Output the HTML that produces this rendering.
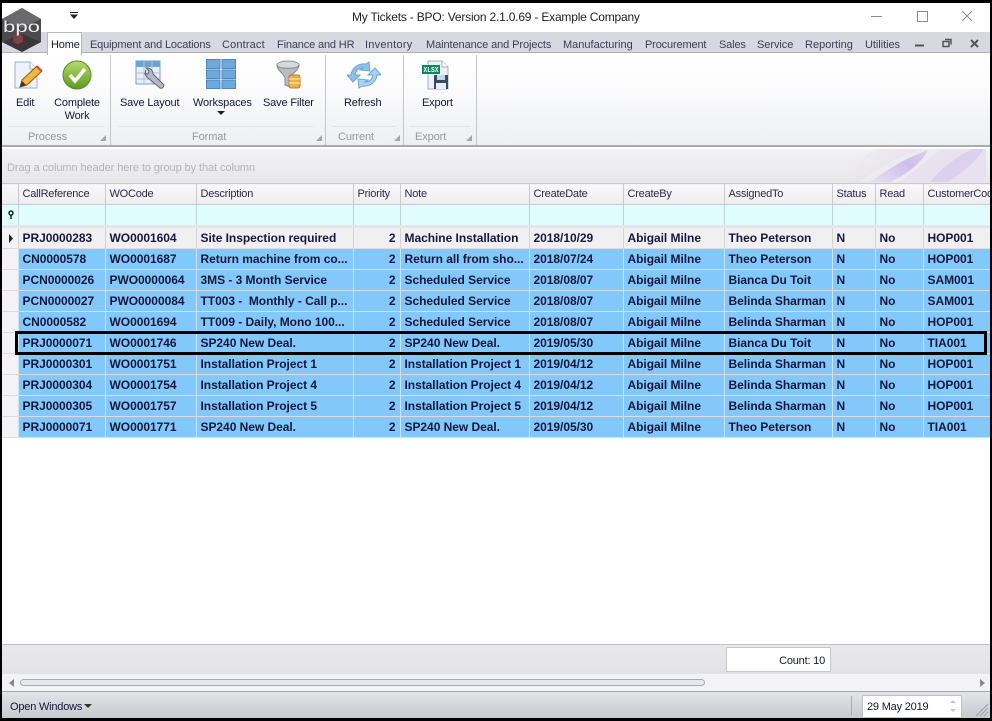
<!DOCTYPE html>
<html><head><meta charset="utf-8"><title>My Tickets</title>
<style>
html,body{margin:0;padding:0;background:#000}
#app{position:relative;width:992px;height:721px;overflow:hidden;background:#fff;font:11px "Liberation Sans",sans-serif;color:#15153a;letter-spacing:-.2px}
.a{position:absolute;white-space:nowrap}
#bt{left:0;top:0;width:992px;height:3px;background:#000}
#bl{left:0;top:0;width:2px;height:721px;background:#000;z-index:9}
#br{left:990px;top:0;width:2px;height:721px;background:#000;z-index:9}
#bb{left:0;top:718px;width:992px;height:3px;background:#000;z-index:9}
#tabs{left:2px;top:32px;width:988px;height:21px;background:#d6d9df;border-bottom:1px solid #aeb0b5;box-sizing:border-box}
.tab{top:39px;color:#3c3c58;letter-spacing:-.15px}
#ribbon{left:2px;top:53px;width:988px;height:92px;background:linear-gradient(#fff 0,#fcfcfd 35%,#eeeff2 100%);border-bottom:2px solid #a9abaf;box-sizing:content-box}
.sep{top:55px;width:1px;height:90px;background:#c5c6ca}
.lab{color:#15153a;text-align:center;line-height:13px;letter-spacing:-.16px}
.grp{top:131px;color:#98999e;text-align:center;letter-spacing:-.1px}
.gl{top:126px;height:1px;background:#e3e4e7}
.cor{top:135px;width:0;height:0;border-left:6px solid transparent;border-bottom:6px solid #a5a6aa}
#gp{left:2px;top:149px;width:988px;height:34px;background:linear-gradient(#f2f2f4,#e7e7ea)}
table{position:absolute;left:2px;border-collapse:collapse;table-layout:fixed;width:988px}
.grid td{height:20px;padding:0 0 0 5px;overflow:hidden;white-space:nowrap;box-sizing:border-box;border-right:1px solid #ccc8d0;border-bottom:1px solid #ddd6da}
#h td{background:linear-gradient(#f8f8f9,#eeeef1);color:#2a2a48;border-color:#c9c9ce;height:21px;border-top:1px solid #c9c9ce;letter-spacing:-.22px;padding-left:4px}
#f td{background:#e0fdfe;border-color:#c9d0d4;height:21px}
.grid td:first-child{background:#f3f3f5;padding:0;border-color:#d3d3d8}
.r td{background:#83c8fb;font-weight:700;font-size:12px;color:#17173c;letter-spacing:-.04px;height:21px!important;border-right-color:#cfe3f5!important;border-bottom-color:#e3d9da!important;padding-left:4px}
.r0 td{background:#f0f0f2;height:20px!important}
.r0 td{border-right-color:#d4d4d8!important}
.r td.n{text-align:right;padding-right:4px!important}
#box{left:15px;top:331px;width:972px;height:24px;border:3px solid #000;box-sizing:border-box;z-index:5}
#foot{left:2px;top:644px;width:988px;height:30px;background:linear-gradient(#e9e9ec,#e2e2e6);border-top:1px solid #c4c4c9;box-sizing:border-box}
#cnt{left:726px;top:647px;width:105px;height:25px;background:#fff;border:1px solid #c6c7cb;box-sizing:border-box;text-align:right;padding:7px 5px 0 0;color:#15153a}
#sc{left:2px;top:674px;width:988px;height:17px;background:#f3f3f5}
#th{left:20px;top:679px;width:685px;height:7px;background:#e6e7ea;border:1px solid #a9abb2;border-radius:4px;box-sizing:border-box}
#st{left:2px;top:691px;width:988px;height:27px;background:linear-gradient(#e3e3e7,#c9cad0);border-top:1px solid #a5a6ab;box-sizing:border-box}
#dt{left:862px;top:695px;width:100px;height:22px;background:#fff;box-sizing:border-box;padding:5px 0 0 4px;border:1px solid #c0c1c6;border-bottom:0}
</style></head><body>
<div id="app">
<div class="a" id="bt"></div><div class="a" id="bl"></div><div class="a" id="br"></div><div class="a" id="bb"></div>

<div class="a" style="left:352px;top:10px;font-size:12px;color:#222;letter-spacing:-.2px">My Tickets - BPO: Version 2.1.0.69 - Example Company</div>
<svg class="a" style="left:68px;top:11px" width="12" height="10"><path d="M2 1h8v1H2zM2 3.500h8L6 8z" fill="#222"/></svg>
<svg class="a" style="left:870px;top:8px" width="110" height="18" fill="none" stroke="#8a8a8a"><path d="M1 8.500h11"/><path d="M47.500 3.500h10v10h-10z"/><path d="M92 3l10 10M102 3L92 13"/></svg>

<div class="a" id="tabs"></div>
<div class="a" style="left:47px;top:32px;width:35px;height:23px;background:#fff;border:1px solid #b7b9bd;border-bottom:0;box-sizing:border-box;z-index:2"></div>
<div class="a tab" style="left:51px;color:#15153a;z-index:3">Home</div>
<div class="a tab" style="left:90px">Equipment and Locations</div>
<div class="a tab" style="left:222px;letter-spacing:.15px">Contract</div>
<div class="a tab" style="left:277px">Finance and HR</div>
<div class="a tab" style="left:365px;letter-spacing:.25px">Inventory</div>
<div class="a tab" style="left:426px;letter-spacing:-.08px">Maintenance and Projects</div>
<div class="a tab" style="left:563px;letter-spacing:0">Manufacturing</div>
<div class="a tab" style="left:645px">Procurement</div>
<div class="a tab" style="left:719px">Sales</div>
<div class="a tab" style="left:757px;letter-spacing:-.05px">Service</div>
<div class="a tab" style="left:805px;letter-spacing:.02px">Reporting</div>
<div class="a tab" style="left:865px;letter-spacing:-.05px">Utilities</div>
<svg class="a" style="left:912px;top:36px" width="70" height="14"><path d="M3 9.500h9" stroke="#555" stroke-width="2"/><path d="M31 5.500h6v5h-6zM33 3.500h6v5" fill="none" stroke="#555" stroke-width="1.500"/><path d="M59 4l7 7M66 4l-7 7" stroke="#555" stroke-width="2"/></svg>

<svg class="a" style="left:0;top:6px;z-index:4" width="46" height="48"><path d="M22 2l19 11v23L22 46 2 36V13z" fill="#4b4b4e"/><path d="M22 2l19 11L22 22 2 13z" fill="#6a6a6d"/><path d="M2 36l20-8 19 8-19 10z" fill="#38383b"/><path d="M18 28.500l4 2.300v4.500l-4 2.300-4-2.300v-4.500z" fill="#555" stroke="#c8202a" stroke-width="1.500"/><text x="3" y="26" font-family="Liberation Sans" font-size="16" letter-spacing="0" textLength="37" lengthAdjust="spacingAndGlyphs" fill="#eee">bpo</text></svg>

<div class="a" id="ribbon"></div>
<div class="a sep" style="left:110px"></div><div class="a sep" style="left:325px"></div><div class="a sep" style="left:403px"></div><div class="a sep" style="left:476px"></div>

<svg class="a" style="left:13px;top:59px" width="30" height="32"><path d="M2 3h15l7 7v19H2z" fill="#eef2fb" stroke="#9fb0d0"/><path d="M17 3v7h7" fill="#fff" stroke="#9fb0d0"/><path d="M7 28l2-7 15-14 5 5-15 14z" fill="#f2b63c" stroke="#8a5a1e"/><path d="M23 8l5 5 1-2-4-4z" fill="#d8442f"/><path d="M7 28l2-6 4 4z" fill="#333"/></svg>
<svg class="a" style="left:62px;top:60px" width="30" height="30"><defs><linearGradient id="g1" x1="0" y1="0" x2="0" y2="1"><stop offset="0" stop-color="#b6da6e"/><stop offset="1" stop-color="#5d9a20"/></linearGradient></defs><circle cx="15" cy="15" r="14" fill="url(#g1)" stroke="#5b8a26"/><path d="M8 15l5 6 10-12" fill="none" stroke="#fff" stroke-width="3.500"/></svg>
<svg class="a" style="left:135px;top:59px" width="32" height="32"><rect x="1" y="2" width="24" height="23" fill="#e8eff9" stroke="#7f9cc2"/><rect x="1" y="2" width="24" height="6" fill="#6ea3d8"/><path d="M9 2v23M17 2v23M1 14h24M1 20h24" stroke="#a9c0dc"/><path d="M11 11a6 6 0 0 0 2 8l12 10c2 1 4-1 4-3L18 15a6 6 0 0 0-7-6l3 3-1 3-3 0z" fill="#b5bac2" stroke="#5f6670"/></svg>
<svg class="a" style="left:206px;top:59px" width="31" height="31"><g fill="#6fa8dc" stroke="#4a86c0"><rect x=".5" y=".5" width="13.500" height="9"/><rect x="16" y=".5" width="13.500" height="9"/><rect x=".5" y="11" width="13.500" height="8.500"/><rect x="16" y="11" width="13.500" height="8.500"/><rect x=".5" y="21" width="13.500" height="8.500"/><rect x="16" y="21" width="13.500" height="8.500"/></g></svg>
<svg class="a" style="left:275px;top:59px" width="28" height="32"><ellipse cx="13" cy="6" rx="11" ry="4" fill="#d5d8dc" stroke="#8e939a"/><path d="M2 7c1 5 7 8 8 12v7l5 2v-9c1-4 8-7 9-12-3 3-19 3-22 0z" fill="#b8bcc2" stroke="#868b92"/><rect x="14" y="16" width="11" height="13" rx="2" fill="#eab04c" stroke="#b57f25"/><path d="M14 20h11M14 24h11" stroke="#fff0c8"/></svg>
<svg class="a" style="left:347px;top:61px" width="34" height="28"><path d="M4 14C5 6 12 2 19 3l3-2 1 9-10-1 3-2c-4 0-7 2-8 7h5l-7 7-6-7z" fill="#8fc0ea" stroke="#6fa3d0"/><path d="M30 14c-1 8-8 12-15 11l-3 2-1-9 10 1-3 2c4 0 7-2 8-7h-5l7-7 6 7z" fill="#a9d2f2" stroke="#6fa3d0"/></svg>
<svg class="a" style="left:422px;top:60px" width="34" height="30"><path d="M6 1h14l6 6v22H6z" fill="#eef1f8" stroke="#a4afc4"/><path d="M20 1v6h6" fill="#fff" stroke="#a4afc4"/><rect x="0" y="5" width="18" height="9" fill="#0a8a5c"/><text x="1.500" y="12" font-family="Liberation Mono" font-size="7.500" font-weight="700" letter-spacing="0" textLength="15" lengthAdjust="spacingAndGlyphs" fill="#fff">XLSX</text><rect x="12" y="15" width="14" height="14" fill="#3a4a60"/><rect x="15" y="15" width="8" height="5" fill="#c8d4e4"/><rect x="14" y="23" width="10" height="6" fill="#e8eef6"/></svg>

<div class="a lab" style="left:16px;top:97px">Edit</div>
<div class="a lab" style="left:47px;top:97px;width:60px">Complete<br>Work</div>
<div class="a lab" style="left:120px;top:97px">Save Layout</div>
<div class="a lab" style="left:193px;top:97px">Workspaces</div>
<svg class="a" style="left:217px;top:110px" width="8" height="6"><path d="M0 1h8L4 5z" fill="#222"/></svg>
<div class="a lab" style="left:263px;top:97px">Save Filter</div>
<div class="a lab" style="left:344px;top:97px">Refresh</div>
<div class="a lab" style="left:422px;top:97px">Export</div>

<div class="a gl" style="left:8px;width:96px"></div><div class="a gl" style="left:118px;width:195px"></div><div class="a gl" style="left:332px;width:64px"></div><div class="a gl" style="left:410px;width:60px"></div>
<div class="a grp" style="left:28px">Process</div><div class="a grp" style="left:192px">Format</div><div class="a grp" style="left:338px">Current</div><div class="a grp" style="left:415px">Export</div>
<div class="a cor" style="left:100px"></div><div class="a cor" style="left:316px"></div><div class="a cor" style="left:394px"></div><div class="a cor" style="left:466px"></div>

<div class="a" id="gp"></div>
<svg class="a" style="left:830px;top:149px" width="160" height="33"><defs><linearGradient id="p1" x1="0" y1="0" x2="1" y2="0"><stop offset="0" stop-color="#e8e4ec" stop-opacity="0"/><stop offset="1" stop-color="#eadfee"/></linearGradient><linearGradient id="p2" x1="0" y1="1" x2="1" y2="0"><stop offset="0" stop-color="#e4dff3"/><stop offset=".6" stop-color="#cfbeea"/><stop offset="1" stop-color="#dccdee"/></linearGradient></defs><path d="M0 33L45 0h50L30 33z" fill="url(#p1)"/><path d="M30 33C50 18 72 6 92 0h20c-10 14-24 26-42 33z" fill="#ecebf0"/><path d="M40 33C58 20 78 8 98 1c-6 12-20 24-38 32z" fill="url(#p2)"/><path d="M70 33C85 22 100 8 112 0h44v33z" fill="#e8e2f0"/><path d="M100 33c10-12 24-24 42-33h12c-8 14-26 26-36 33z" fill="#dcd0ee"/></svg>
<div class="a" style="left:7px;top:162px;color:#b4b5ba;letter-spacing:-.08px">Drag a column header here to group by that column</div>

<table class="grid" style="top:183px">
<colgroup><col style="width:16px"><col style="width:87px"><col style="width:91px"><col style="width:157px"><col style="width:47px"><col style="width:129px"><col style="width:94px"><col style="width:101px"><col style="width:108px"><col style="width:43px"><col style="width:48px"><col style="width:67px"></colgroup>
<tr id="h"><td></td><td>CallReference</td><td>WOCode</td><td>Description</td><td>Priority</td><td>Note</td><td>CreateDate</td><td>CreateBy</td><td>AssignedTo</td><td>Status</td><td>Read</td><td>CustomerCode</td></tr>
<tr id="f"><td></td><td></td><td></td><td></td><td></td><td></td><td></td><td></td><td></td><td></td><td></td><td></td></tr>
</table>
<svg class="a" style="left:7px;top:210px" width="8" height="10"><circle cx="4" cy="3" r="2" fill="none" stroke="#222" stroke-width="1.500"/><path d="M4 5v4" stroke="#222" stroke-width="1.500"/></svg>
<div class="a" style="left:2px;top:225px;width:988px;height:3px;background:#e6e6ea"></div>

<table class="grid" style="top:228px">
<colgroup><col style="width:16px"><col style="width:87px"><col style="width:91px"><col style="width:157px"><col style="width:47px"><col style="width:129px"><col style="width:94px"><col style="width:101px"><col style="width:108px"><col style="width:43px"><col style="width:48px"><col style="width:67px"></colgroup>
<tr class="r r0"><td></td><td>PRJ0000283</td><td>WO0001604</td><td>Site Inspection required</td><td class="n">2</td><td>Machine Installation</td><td>2018/10/29</td><td>Abigail Milne</td><td>Theo Peterson</td><td>N</td><td>No</td><td>HOP001</td></tr>
<tr class="r"><td></td><td>CN0000578</td><td>WO0001687</td><td>Return machine from co...</td><td class="n">2</td><td>Return all from sho...</td><td>2018/07/24</td><td>Abigail Milne</td><td>Theo Peterson</td><td>N</td><td>No</td><td>HOP001</td></tr>
<tr class="r"><td></td><td>PCN0000026</td><td>PWO0000064</td><td>3MS - 3 Month Service</td><td class="n">2</td><td>Scheduled Service</td><td>2018/08/07</td><td>Abigail Milne</td><td>Bianca Du Toit</td><td>N</td><td>No</td><td>SAM001</td></tr>
<tr class="r"><td></td><td>PCN0000027</td><td>PWO0000084</td><td>TT003 -&nbsp; Monthly - Call p...</td><td class="n">2</td><td>Scheduled Service</td><td>2018/08/07</td><td>Abigail Milne</td><td>Belinda Sharman</td><td>N</td><td>No</td><td>SAM001</td></tr>
<tr class="r"><td></td><td>CN0000582</td><td>WO0001694</td><td>TT009 - Daily, Mono 100...</td><td class="n">2</td><td>Scheduled Service</td><td>2018/08/07</td><td>Abigail Milne</td><td>Belinda Sharman</td><td>N</td><td>No</td><td>HOP001</td></tr>
<tr class="r"><td></td><td>PRJ0000071</td><td>WO0001746</td><td>SP240 New Deal.</td><td class="n">2</td><td>SP240 New Deal.</td><td>2019/05/30</td><td>Abigail Milne</td><td>Bianca Du Toit</td><td>N</td><td>No</td><td>TIA001</td></tr>
<tr class="r"><td></td><td>PRJ0000301</td><td>WO0001751</td><td>Installation Project 1</td><td class="n">2</td><td>Installation Project 1</td><td>2019/04/12</td><td>Abigail Milne</td><td>Belinda Sharman</td><td>N</td><td>No</td><td>HOP001</td></tr>
<tr class="r"><td></td><td>PRJ0000304</td><td>WO0001754</td><td>Installation Project 4</td><td class="n">2</td><td>Installation Project 4</td><td>2019/04/12</td><td>Abigail Milne</td><td>Belinda Sharman</td><td>N</td><td>No</td><td>HOP001</td></tr>
<tr class="r"><td></td><td>PRJ0000305</td><td>WO0001757</td><td>Installation Project 5</td><td class="n">2</td><td>Installation Project 5</td><td>2019/04/12</td><td>Abigail Milne</td><td>Belinda Sharman</td><td>N</td><td>No</td><td>HOP001</td></tr>
<tr class="r"><td></td><td>PRJ0000071</td><td>WO0001771</td><td>SP240 New Deal.</td><td class="n">2</td><td>SP240 New Deal.</td><td>2019/05/30</td><td>Abigail Milne</td><td>Theo Peterson</td><td>N</td><td>No</td><td>TIA001</td></tr>
</table>
<svg class="a" style="left:8px;top:234px" width="6" height="9"><path d="M1 0l4 4.500L1 9z" fill="#222"/></svg>
<div class="a" id="box"></div>

<div class="a" id="foot"></div>
<div class="a" id="cnt">Count: 10</div>
<div class="a" id="sc"></div>
<div class="a" id="th"></div>
<svg class="a" style="left:9px;top:679px" width="6" height="8"><path d="M5 0v8L0 4z" fill="#888"/></svg>
<svg class="a" style="left:979px;top:679px" width="6" height="8"><path d="M1 0v8l5-4z" fill="#888"/></svg>
<div class="a" id="st"></div>
<div class="a" style="left:10px;top:701px">Open Windows</div>
<svg class="a" style="left:84px;top:704px" width="8" height="5"><path d="M0 0h8L4 4z" fill="#333"/></svg>
<div class="a" style="left:851px;top:696px;width:1px;height:19px;background:#aaabb0"></div>
<div class="a" id="dt">29 May 2019</div>
<svg class="a" style="left:948px;top:698px" width="10" height="17"><path d="M2 5l3-3 3 3zM2 11l3 3 3-3z" fill="#c4c5ca"/></svg>
<svg class="a" style="left:975px;top:703px" width="14" height="14" stroke="#a0a1a6"><path d="M1 13L13 1M5 13l8-8M9 13l4-4"/></svg>
</div>
</body></html>
